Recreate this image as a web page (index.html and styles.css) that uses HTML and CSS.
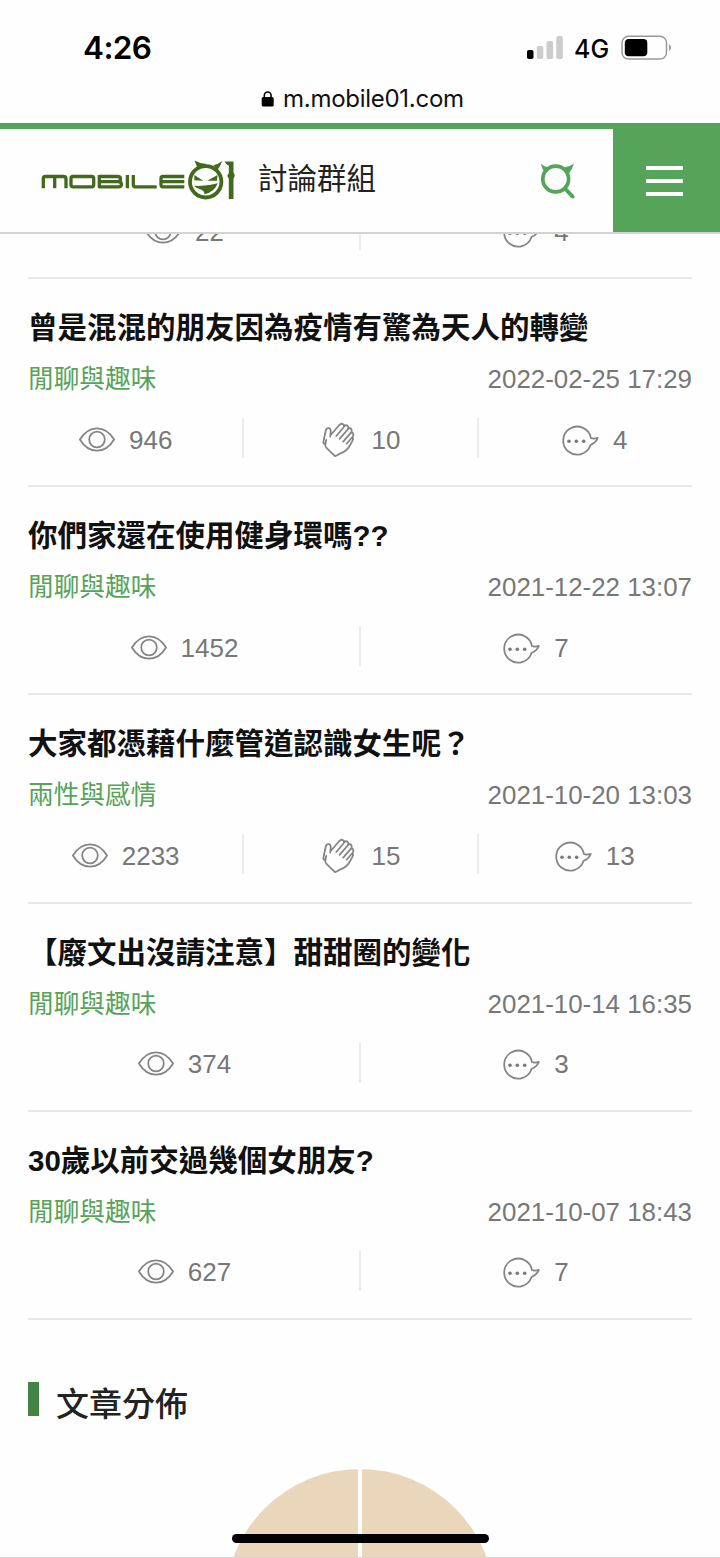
FILE: index.html
```html
<!DOCTYPE html>
<html lang="zh-Hant">
<head>
<meta charset="utf-8">
<title>Mobile01</title>
<link rel="stylesheet" href="styles.css">
</head>
<body>
<svg class="defs" aria-hidden="true">
  <symbol id="eye" viewBox="0 0 36 36">
    <path d="M.9 17.500C5 10.700 11 6.300 18 6.300S31 10.700 35.100 17.500C31 24.300 25 28.700 18 28.700S5 24.300.9 17.500Z"/>
    <circle cx="18" cy="17.500" r="7.800"/>
  </symbol>
  <symbol id="clap" viewBox="0 0 36 36">
    <path d="M13 34.200L4.200 25.600Q3 24.200 3.300 22.500L4.200 18M3.200 22.300Q1 21.800 1.500 19.500L3.700 8.800C4.400 5 9.100 5.300 8.700 9.300L8.200 14.500M8.700 13L17.300 3C19.800.4 23.500 2.700 21.500 5.500L14.300 14M21.800 4.200C24.500 1.900 27.800 4.500 25.700 7.500L17.800 16.700M26.200 6.600C29 5.300 31 8.200 29 10.700L21.200 19.600M29.300 10.500C31.500 10.600 32 13 30.500 15L24.800 21.500M30.500 15C32.500 17 29.600 20 28.500 22.400C26.200 27.400 23.700 29.700 18 31.700C16.100 32.300 15 33.500 13 34.200"/>
  </symbol>
  <symbol id="reply" viewBox="0 0 36 36">
    <g transform="translate(-1 .7)">
      <path d="M29 15.500A14 14 0 1 0 28.500 22.300C32.300 20.500 34.800 18.500 35.700 15.200C33.700 15.900 32 16.500 29 15.500Z"/>
      <g class="dots"><circle cx="7" cy="18.500" r="1.800"/><circle cx="14.300" cy="18.500" r="1.800"/><circle cx="21.700" cy="18.500" r="1.800"/></g>
    </g>
  </symbol>
</svg>

<div class="status">
  <div class="clock">4:26</div>
  <div class="signals">
    <svg class="bars" viewBox="0 0 36 24"><rect x="0" y="14" width="6.500" height="9" rx="1.800"/><g fill="#ccc"><rect x="9.800" y="10" width="6.500" height="13" rx="1.800"/><rect x="19.600" y="5" width="6.500" height="18" rx="1.800"/><rect x="29.300" y="0" width="6.500" height="23" rx="1.800"/></g></svg>
    <span class="network">4G</span>
    <svg class="battery" viewBox="0 0 52 26"><rect x="1" y="1.300" width="44.500" height="22.800" rx="6.500" fill="none" stroke="#999" stroke-width="1.500"/><rect x="3.800" y="4" width="22.500" height="17.300" rx="4"/><path d="M48 9Q52 12.500 48 16Z" fill="#999"/></svg>
  </div>
</div>
<div class="address">
  <svg class="lock" viewBox="0 0 14 16"><rect x=".7" y="6" width="12" height="9.500" rx="1.600"/><path d="M3.300 7V4.500C3.300-.3 10.100-.3 10.100 4.500V7" fill="none" stroke="#000" stroke-width="1.500"/></svg>
  <span>m.mobile01.com</span>
</div>

<header class="header">
  <svg class="logo" viewBox="0 0 196 42" role="img" aria-label="Mobile01">
    <g fill="none" stroke="#416a1c" stroke-width="3.300" stroke-linejoin="round">
      <path d="M3.300 29.300V19.500Q3.300 17.500 5.300 17.500H23.500Q26 17.500 26 20V29.300M14.700 17.500V29.300"/>
      <rect x="31" y="17.500" width="22.700" height="10.300" rx="2"/>
      <path d="M59.300 17.500H77.500Q80.500 17.500 80.500 20T77.500 22.600H59.300M77.500 22.600Q81.500 22.600 81.500 25.200T78.500 27.800H59.300V16M87.400 16V29.300M93.300 16V25.800Q93.300 27.800 95.300 27.800H116.700M144.300 17.500H123Q121 17.500 121 19.500V25.800Q121 27.800 123 27.800H144.300M121 22.600H144.300"/>
    </g>
    <circle cx="165.700" cy="22.800" r="15.700" fill="none" stroke="#416a1c" stroke-width="3.800"/>
    <path fill="#416a1c" d="M154.500 1.500Q160 4.700 166.700 5L162 8.500L157.500 10.500Q156.500 5.500 154.500 1.500ZM182.300 2Q178.500 5 173.300 6.200L177.300 11Q180.500 7 182.300 2ZM154.300 16L163.300 21.700L154.300 21.200ZM177.500 16L167.300 21.700L177 21.700ZM154 26.800Q167 27.500 177.700 24.200Q175 32.500 164.500 35.200Q164.500 31.500 159.500 30Q156 29 154 26.800ZM184.500 2.500H193.500V13.500Q194.800 15 194.700 17L193.500 19.500V40H188.800V19.500L187.200 17L188.800 14V6.500Q187 6.500 184.500 2.500Z"/>
  </svg>
  <h1 class="header-title">討論群組</h1>
  <svg class="search" viewBox="0 0 36 38">
    <g fill="none" stroke="#56a35a" stroke-width="3.700"><circle cx="15.700" cy="18" r="12.900"/><path d="M25 27.500L32.500 35.500" stroke-width="4" stroke-linecap="round"/></g>
    <path fill="#56a35a" d="M.7 2.800L5 5.500L9.500 6.500L4.500 11.500Q2.500 8 .7 2.800ZM34 2.500Q32 9 28.500 13L23 7Q29.500 6 34 2.500Z"/>
  </svg>
  <button class="menu" aria-label="Menu"><i></i><i></i><i></i></button>
</header>

<main class="content">
  <div class="clipped">
    <div class="stats"><span class="stat"><svg class="icon"><use href="#eye"/></svg><span>22</span></span><span class="stat"><svg class="icon"><use href="#reply"/></svg><span>4</span></span></div>
  </div>
  <article class="post">
    <h2 class="title">曾是混混的朋友因為疫情有驚為天人的轉變</h2>
    <div class="meta"><a class="category">閒聊與趣味</a><time>2022-02-25 17:29</time></div>
    <div class="stats"><span class="stat"><svg class="icon"><use href="#eye"/></svg><span>946</span></span><span class="stat"><svg class="icon"><use href="#clap"/></svg><span>10</span></span><span class="stat"><svg class="icon"><use href="#reply"/></svg><span>4</span></span></div>
  </article>
  <article class="post">
    <h2 class="title">你們家還在使用健身環嗎??</h2>
    <div class="meta"><a class="category">閒聊與趣味</a><time>2021-12-22 13:07</time></div>
    <div class="stats"><span class="stat"><svg class="icon"><use href="#eye"/></svg><span>1452</span></span><span class="stat"><svg class="icon"><use href="#reply"/></svg><span>7</span></span></div>
  </article>
  <article class="post">
    <h2 class="title">大家都憑藉什麼管道認識女生呢？</h2>
    <div class="meta"><a class="category">兩性與感情</a><time>2021-10-20 13:03</time></div>
    <div class="stats"><span class="stat"><svg class="icon"><use href="#eye"/></svg><span>2233</span></span><span class="stat"><svg class="icon"><use href="#clap"/></svg><span>15</span></span><span class="stat"><svg class="icon"><use href="#reply"/></svg><span>13</span></span></div>
  </article>
  <article class="post">
    <h2 class="title">【廢文出沒請注意】甜甜圈的變化</h2>
    <div class="meta"><a class="category">閒聊與趣味</a><time>2021-10-14 16:35</time></div>
    <div class="stats"><span class="stat"><svg class="icon"><use href="#eye"/></svg><span>374</span></span><span class="stat"><svg class="icon"><use href="#reply"/></svg><span>3</span></span></div>
  </article>
  <article class="post">
    <h2 class="title">30歲以前交過幾個女朋友?</h2>
    <div class="meta"><a class="category">閒聊與趣味</a><time>2021-10-07 18:43</time></div>
    <div class="stats"><span class="stat"><svg class="icon"><use href="#eye"/></svg><span>627</span></span><span class="stat"><svg class="icon"><use href="#reply"/></svg><span>7</span></span></div>
  </article>
  <section class="chart">
    <h2 class="section-title">文章分佈</h2>
    <svg class="pie" viewBox="0 0 270 89"><circle cx="135" cy="135" r="135" fill="#ead7bb"/><path d="M135 0V89" stroke="#fff" stroke-width="4"/></svg>
  </section>
</main>
<div class="home-indicator"></div>
</body>
</html>
```
FILE: styles.css
```css
* { box-sizing: border-box; }
body {
  margin: 0;
  width: 720px;
  height: 1558px;
  overflow: hidden;
  position: relative;
  background: #fefefe;
  color: #777;
  font-family: "Liberation Sans", "Noto Sans CJK TC", sans-serif;
  border-bottom: 1px solid #d5d5d5;
}
h1, h2 { margin: 0; }
svg { display: block; flex: none; }
symbol { overflow: visible; }
.defs { position: absolute; width: 0; height: 0; }

.status {
  height: 80px;
  padding: 16px 47px 0 83px;
  display: flex;
  justify-content: space-between;
  color: #000;
  font-family: Inter, sans-serif;
}
.clock { font-size: 31.500px; font-weight: 600; line-height: 64px; letter-spacing: -0.600px; }
.signals { display: flex; align-items: center; height: 64px; }
.bars { width: 36px; height: 24px; }
.network { margin: 1px 0 0 11px; width: 47px; font-size: 25px; font-weight: 500; }
.battery { width: 52px; height: 26px; }
.address {
  height: 43px;
  padding: 0 0 6px 261px;
  display: flex;
  align-items: center;
  gap: 8px;
  color: #111;
  font: 24px Inter, sans-serif;
  letter-spacing: -0.270px;
}
.lock { width: 14px; height: 16px; }

.header {
  height: 111px;
  border-top: 6px solid #56a35a;
  border-bottom: 2px solid #d3d3d3;
  display: flex;
  align-items: stretch;
  padding-left: 40px;
}
.logo { width: 196px; height: 42px; margin-top: 30px; }
.header-title {
  margin-left: 22px;
  width: 282px;
  color: #222;
  font-size: 29.500px;
  font-weight: 400;
  line-height: 99px;
}
.search { width: 36px; height: 38px; margin-top: 32px; }
.menu {
  margin: 0 0 0 auto;
  width: 107px;
  border: 0;
  padding: 1px 0 0;
  background: #56a35a;
  display: flex;
  flex-direction: column;
  align-items: center;
  justify-content: center;
  gap: 9px;
}
.menu i { width: 37px; height: 4px; margin-right: 5px; background: #fff; }

.content { padding: 0 28px; }
.clipped {
  height: 45px;
  overflow: hidden;
  margin: 0 -20px;
  padding: 0 20px 29px;
  position: relative;
  display: flex;
  flex-direction: column;
  justify-content: flex-end;
}
.clipped .dots { display: none; }
.clipped::after { content: ""; position: absolute; left: 20px; right: 20px; bottom: 0; height: 2px; background: #e9e9e9; }
.post { height: 208.200px; padding-top: 27px; border-bottom: 2px solid #e9e9e9; }
.title { height: 44px; color: #111; font-size: 29.500px; font-weight: 700; line-height: 44px; white-space: nowrap; }
.meta { height: 58px; display: flex; justify-content: space-between; font-size: 25.900px; line-height: 58px; }
.category { color: #56a35a; font-size: 25.700px; }
.stats { flex: none; height: 40px; margin: 10px -20px 0; display: flex; color: #777; font-size: 26px; line-height: 40px; }
.stat { flex: 1 1 0; padding: 3px 0 0 1px; display: flex; align-items: center; justify-content: center; gap: 14px; }
.stat + .stat { border-left: 2px solid #ebebeb; padding-left: 0; }
.stat:last-child { margin-left: -1px; }
.icon { width: 36px; height: 36px; overflow: visible; fill: none; stroke: #858585; stroke-width: 1.800; stroke-linejoin: round; stroke-linecap: round; }
.dots { fill: #777; stroke: none; }

.chart { padding-top: 62px; }
.section-title {
  height: 34px;
  border-left: 11px solid #438346;
  padding-left: 17px;
  color: #222;
  font-size: 33px;
  font-weight: 500;
  line-height: 45px;
}
.pie { width: 270px; height: 89px; margin: 53px auto 0; }
.home-indicator { position: absolute; left: 232px; top: 1534px; width: 257px; height: 9px; border-radius: 5px; background: #000; }
```
